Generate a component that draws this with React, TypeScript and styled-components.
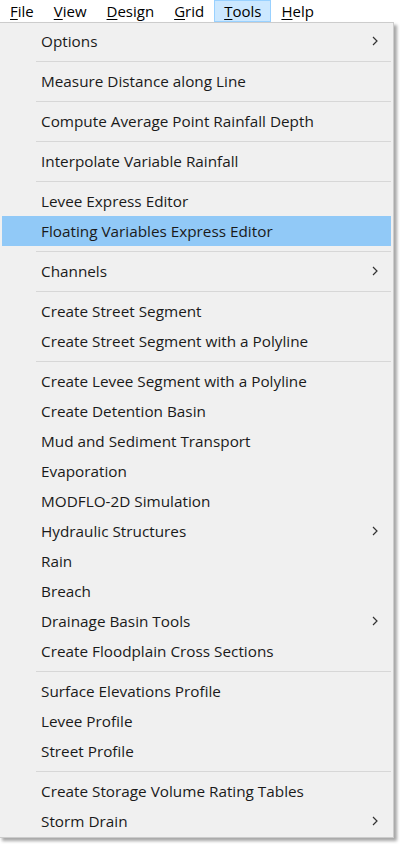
import React from "react";
import styled, { createGlobalStyle } from "styled-components";

const GlobalStyle = createGlobalStyle`
  html, body { margin: 0; padding: 0; background: #ffffff; }
  body {
    font-family: "Open Sans", "Noto Sans", "DejaVu Sans", sans-serif;
    font-size: 15.3px;
    color: #000;
    -webkit-font-smoothing: antialiased;
  }
`;

const Page = styled.div`
  width: 400px;
  height: 844px;
  overflow: hidden;
  background: #ffffff;
`;

const MenuBar = styled.div`
  display: flex;
  height: 22px;
  background: #ffffff;
  font-size: 15px;
`;

const MenuTitle = styled.div<{ $active?: boolean }>`
  box-sizing: border-box;
  display: flex;
  align-items: center;
  padding: 0 9px;
  height: 22px;
  color: #000;
  background: ${(p) => (p.$active ? "#cce8ff" : "transparent")};
  border: 1px solid ${(p) => (p.$active ? "#99d1ff" : "transparent")};
`;

const Mnemonic = styled.span`
  text-decoration: underline;
  text-underline-offset: 2px;
`;

const Dropdown = styled.div`
  box-sizing: border-box;
  width: 395px;
  margin-left: -1px;
  background: #f0f0f0;
  border: 1px solid #cccccc;
  padding: 3px 2px 1px;
  box-shadow: 3px 3px 3px rgba(0, 0, 0, 0.35);
`;

const Item = styled.div<{ $highlighted?: boolean }>`
  display: flex;
  align-items: center;
  height: 30px;
  padding: 0 13px 0 39px;
  color: #1a1a1a;
  background: ${(p) => (p.$highlighted ? "#91c9f7" : "transparent")};
`;

const Label = styled.span`
  flex: 1;
  white-space: nowrap;
`;

const Separator = styled.div`
  height: 10px;
  display: flex;
  align-items: center;
  &::after {
    content: "";
    flex: 1;
    height: 1px;
    margin-left: 34px;
    background: #d7d7d7;
  }
`;

const Chevron = () => (
  <svg width="6" height="10" viewBox="0 0 6 10">
    <path d="M1 1 L5 5 L1 9" fill="none" stroke="#333" strokeWidth="1.2" />
  </svg>
);

type Entry = { label: string; sub?: boolean; hi?: boolean } | "sep";

const entries: Entry[] = [
  { label: "Options", sub: true },
  "sep",
  { label: "Measure Distance along Line" },
  "sep",
  { label: "Compute Average Point Rainfall Depth" },
  "sep",
  { label: "Interpolate Variable Rainfall" },
  "sep",
  { label: "Levee Express Editor" },
  { label: "Floating Variables Express Editor", hi: true },
  "sep",
  { label: "Channels", sub: true },
  "sep",
  { label: "Create Street Segment" },
  { label: "Create Street Segment with a Polyline" },
  "sep",
  { label: "Create Levee Segment with a Polyline" },
  { label: "Create Detention Basin" },
  { label: "Mud and Sediment Transport" },
  { label: "Evaporation" },
  { label: "MODFLO-2D Simulation" },
  { label: "Hydraulic Structures", sub: true },
  { label: "Rain" },
  { label: "Breach" },
  { label: "Drainage Basin Tools", sub: true },
  { label: "Create Floodplain Cross Sections" },
  "sep",
  { label: "Surface Elevations Profile" },
  { label: "Levee Profile" },
  { label: "Street Profile" },
  "sep",
  { label: "Create Storage Volume Rating Tables" },
  { label: "Storm Drain", sub: true },
];

const titles = [
  { m: "F", rest: "ile" },
  { m: "V", rest: "iew" },
  { m: "D", rest: "esign" },
  { m: "G", rest: "rid" },
  { m: "T", rest: "ools", active: true },
  { m: "H", rest: "elp" },
];

export default function App() {
  return (
    <Page>
      <GlobalStyle />
      <MenuBar>
        {titles.map((t) => (
          <MenuTitle key={t.m} $active={t.active}>
            <Mnemonic>{t.m}</Mnemonic>
            {t.rest}
          </MenuTitle>
        ))}
      </MenuBar>
      <Dropdown>
        {entries.map((e, i) =>
          e === "sep" ? (
            <Separator key={i} />
          ) : (
            <Item key={i} $highlighted={e.hi}>
              <Label>{e.label}</Label>
              {e.sub && <Chevron />}
            </Item>
          )
        )}
      </Dropdown>
    </Page>
  );
}
